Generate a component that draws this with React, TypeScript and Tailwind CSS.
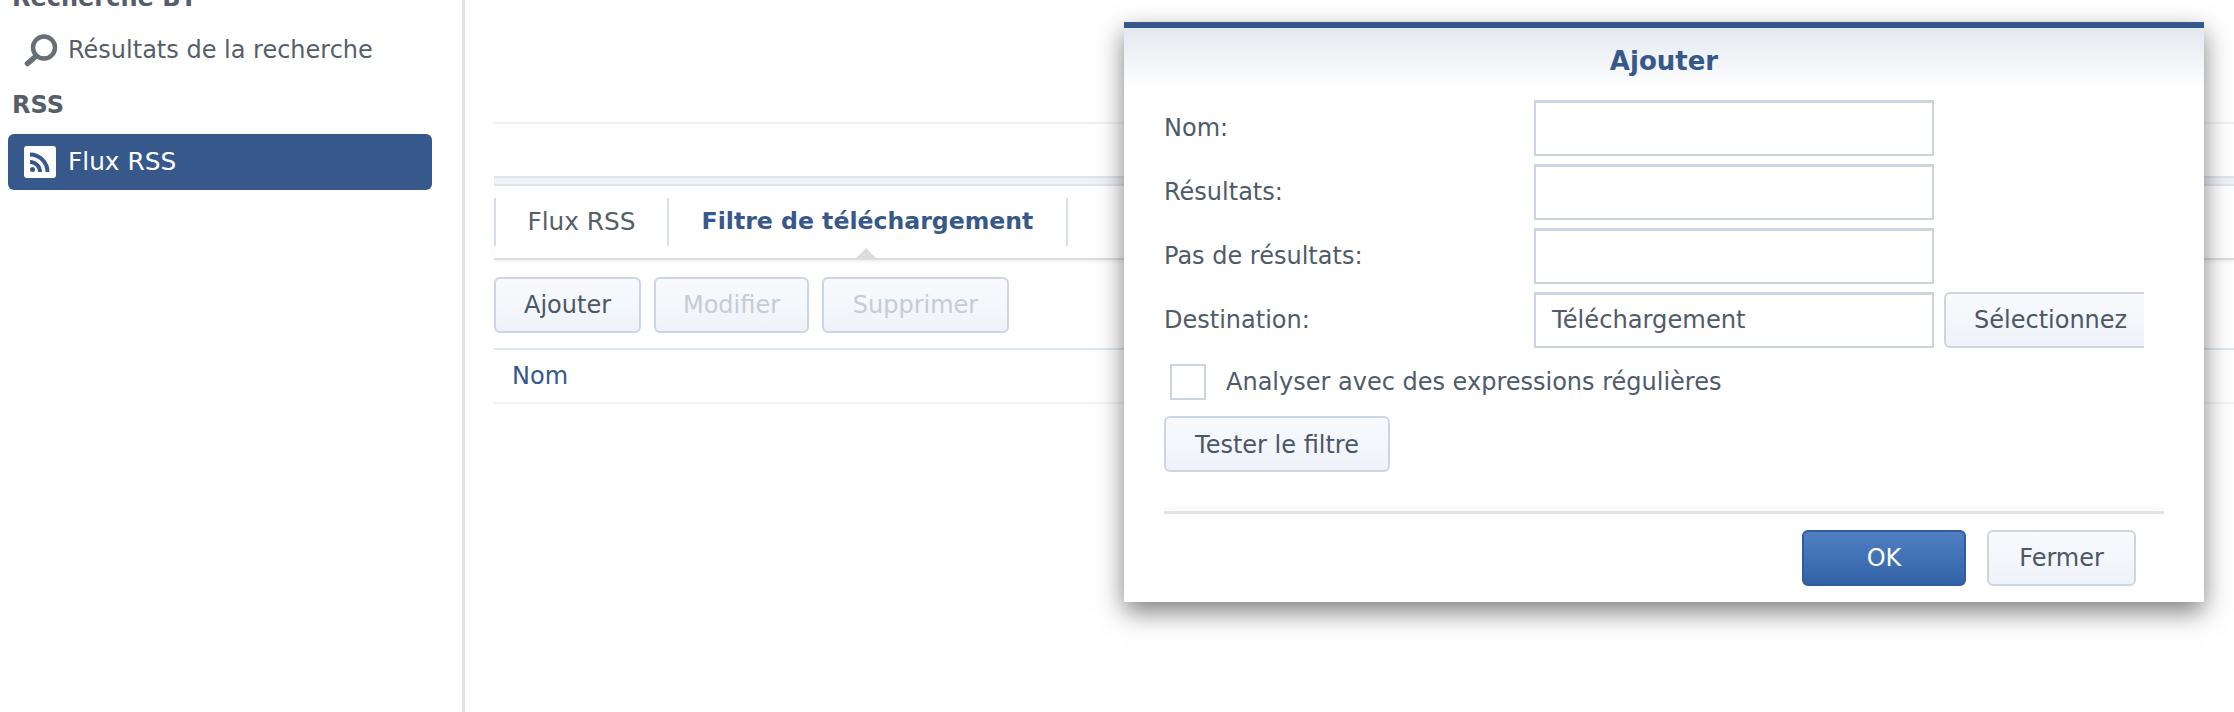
const font = "font-['DejaVu_Sans',sans-serif]";

function SearchIcon() {
  return (
    <svg width="34" height="34" viewBox="0 0 34 34" className="shrink-0">
      <circle cx="20" cy="14.5" r="11" fill="none" stroke="#686e75" strokeWidth="4.5" />
      <path d="M11 24 L3.5 30.5" stroke="#686e75" strokeWidth="5.5" strokeLinecap="round" />
    </svg>
  );
}

function RssIcon() {
  return (
    <svg width="32" height="32" viewBox="0 0 32 32" className="shrink-0">
      <rect width="32" height="32" rx="3" fill="#ffffff" />
      <circle cx="8.5" cy="23.5" r="2.5" fill="#36588a" />
      <path d="M6 16 A10 10 0 0 1 16 26" fill="none" stroke="#36588a" strokeWidth="4" />
      <path d="M6 8.5 A17.5 17.5 0 0 1 23.5 26" fill="none" stroke="#36588a" strokeWidth="4" />
    </svg>
  );
}

function Btn({ label, className = "", disabled = false }: { label: string; className?: string; disabled?: boolean }) {
  return (
    <button
      className={`h-14 rounded-md border-2 border-[#ccd6e2] bg-gradient-to-b from-[#f8fafd] to-[#eff3f9] text-[24px] ${
        disabled ? "text-[#c5ccd4]" : "text-[#4b5765]"
      } ${className}`}
    >
      {label}
    </button>
  );
}

function Field({ label, value = "" }: { label: string; value?: string }) {
  return (
    <div className="flex h-14 items-center">
      <label className="w-[370px] shrink-0 text-[24px] text-[#4e5b69]">{label}</label>
      <div className="flex h-14 w-[400px] items-center border-2 border-t-[3px] border-[#cbd4df] bg-white px-[16px] text-[24.2px] text-[#4e5b69]">
        {value}
      </div>
    </div>
  );
}

function Dialog() {
  return (
    <div className="absolute left-[1124px] top-[22px] flex h-[580px] w-[1080px] flex-col border-t-[6px] border-[#36588a] bg-white shadow-[0_10px_24px_rgba(0,0,0,0.5)]">
      <div className="h-[62px] bg-gradient-to-b from-[#e4e9f0] to-white pt-[16px] text-center text-[26px] leading-[34px] font-bold text-[#36588a]">
        Ajouter
      </div>
      <div className="flex flex-col gap-2 pl-10 pt-[10px]">
        <Field label="Nom:" />
        <Field label="Résultats:" />
        <Field label="Pas de résultats:" />
        <div className="flex">
          <Field label="Destination:" value="Téléchargement" />
          <div className="ml-[10px] flex h-14 w-[200px] items-center overflow-hidden rounded-l-md border-y-2 border-l-2 border-[#ccd6e2] bg-gradient-to-b from-[#f8fafd] to-[#eff3f9] pl-[28px] text-[24px] whitespace-nowrap text-[#4b5765]">
            Sélectionnez
          </div>
        </div>
      </div>
      <div className="mt-4 flex items-center pl-[46px]">
        <div className="h-9 w-9 border-2 border-[#cbd4df] bg-white" />
        <span className="ml-5 text-[24px] text-[#4e5b69]">Analyser avec des expressions régulières</span>
      </div>
      <div className="mt-4 pl-10">
        <Btn label="Tester le filtre" className="w-[226px] pt-[2px]" />
      </div>
      <div className="mx-10 mt-[39px] h-[3px] bg-[#e1e3e6] shadow-[0_-3px_5px_rgba(0,0,0,0.05)]" />
      <div className="flex justify-end gap-[21px] pr-[68px] pt-[16px]">
        <button className="h-14 w-[164px] rounded-md border-2 border-[#2f5d9e] bg-gradient-to-b from-[#4f80c4] to-[#3462a6] text-[24px] text-white">
          OK
        </button>
        <Btn label="Fermer" className="w-[149px]" />
      </div>
    </div>
  );
}

export default function App() {
  return (
    <div className={`relative flex h-[712px] w-[2234px] overflow-hidden bg-white ${font}`}>
      <aside className="h-full w-[465px] shrink-0 border-r-[3px] border-[#e2e2e2]">
        <div className="-mt-[16px] pl-3 text-[24px] leading-[28px] font-bold text-[#565f69]">Recherche BT</div>
        <div className="mt-[18px] flex h-10 items-center gap-[10px] pl-6 text-[24px] text-[#565f69]">
          <SearchIcon />
          Résultats de la recherche
        </div>
        <div className="mt-[21px] pl-3 text-[24px] leading-7 font-bold text-[#565f69]">RSS</div>
        <div className="ml-2 mt-[15px] flex h-14 w-[424px] items-center gap-3 rounded-md bg-[#36588a] pl-4 text-[24.8px] text-white">
          <RssIcon />
          Flux RSS
        </div>
      </aside>
      <main className="min-w-0 flex-1 pl-[29px] pt-[122px]">
        <div className="h-[2px] bg-[#eef0f3]" />
        <div className="mt-[52px] h-[10px] border-y-2 border-[#dfe5ed] bg-[#eef1f5]" />
        <div className="relative mt-3 flex h-[62px] border-b-2 border-[#dcdcdc] pb-3 text-[24px] shadow-[0_2px_3px_rgba(0,0,0,0.06)]">
          <div className="flex h-12 w-[175px] items-center justify-center border-x-2 border-[#d5deea] text-[24.8px] text-[#565f69]">Flux RSS</div>
          <div className="flex h-12 w-[399px] items-center justify-center border-r-2 border-[#d5deea] text-[23.6px] font-bold text-[#36588a]">
            Filtre de téléchargement
          </div>
          <div className="absolute bottom-[-2px] left-[360px] h-3 w-6 bg-[#dcdcdc] [clip-path:polygon(50%_0,100%_100%,0_100%)]" />
        </div>
        <div className="mt-[17px] flex gap-[13px]">
          <Btn label="Ajouter" className="w-[147px]" />
          <Btn label="Modifier" className="w-[155px]" disabled />
          <Btn label="Supprimer" className="w-[187px]" disabled />
        </div>
        <div className="mt-[15px] flex h-[56px] items-center border-y-2 border-t-[#dde5ee] border-b-[#eef1f5] pl-[18px] text-[24px] text-[#36588a]">Nom</div>
      </main>
      <Dialog />
    </div>
  );
}
